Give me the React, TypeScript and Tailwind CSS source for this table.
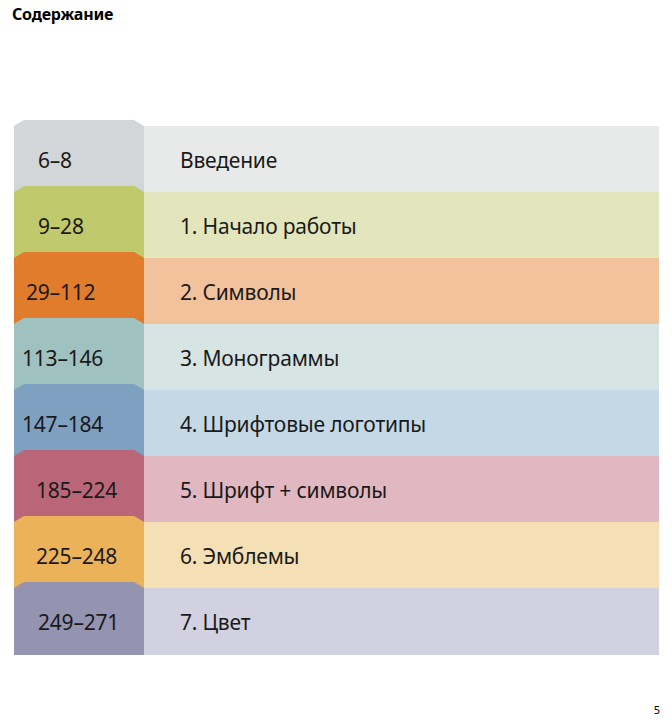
import React from 'react';

const rows = [
    { pages: '6–8', title: 'Введение', tab: 'bg-[#d2d6d9]', body: 'bg-[#e8eaea]', pad: 'pl-[24px]' },
    { pages: '9–28', title: '1. Начало работы', tab: 'bg-[#c0c96b]', body: 'bg-[#e3e6bc]', pad: 'pl-[24px]' },
    { pages: '29–112', title: '2. Символы', tab: 'bg-[#e07c2c]', body: 'bg-[#f2c29c]', pad: 'pl-[12px]' },
    { pages: '113–146', title: '3. Монограммы', tab: 'bg-[#9fc1c0]', body: 'bg-[#d7e4e4]', pad: 'pl-[8px]' },
    { pages: '147–184', title: '4. Шрифтовые логотипы', tab: 'bg-[#7ea0c1]', body: 'bg-[#c5d8e5]', pad: 'pl-[8px]' },
    { pages: '185–224', title: '5. Шрифт + символы', tab: 'bg-[#b96778]', body: 'bg-[#e1b8c1]', pad: 'pl-[22px]' },
    { pages: '225–248', title: '6. Эмблемы', tab: 'bg-[#ebb25a]', body: 'bg-[#f5dfb4]', pad: 'pl-[22px]' },
    { pages: '249–271', title: '7. Цвет', tab: 'bg-[#9493b0]', body: 'bg-[#d2d1e1]', pad: 'pl-[24px]' },
];

export default function App() {
    return (
        <div className="relative w-[672px] h-[720px] bg-white text-[#1a1a1a] font-['Noto_Sans',sans-serif]">
            <h1 className="pl-[12px] pt-[3px] text-[16px] font-bold leading-[22px] tracking-[-0.2px] text-black">Содержание</h1>

            <div className="mt-[101px] ml-[14px] w-[645px] flex flex-col">
                {rows.map((row, i) => (
                    <div key={i} className="flex h-[66px] last:h-[67px]">
                        <div className={`relative w-[130px] flex items-center pt-[3px] ${row.tab} ${row.pad}`}>
                            <div
                                className={`absolute -top-[6px] left-0 right-0 h-[6px] ${row.tab} [clip-path:polygon(0_100%,4px_60%,10px_0,calc(100%-10px)_0,calc(100%-4px)_60%,100%_100%)]`}
                            />
                            <span className="text-[21px] tracking-[-0.2px]">{row.pages}</span>
                        </div>
                        <div className={`flex-1 flex items-center pl-[36px] pt-[3px] ${row.body}`}>
                            <span className="text-[21px] tracking-[-0.2px]">{row.title}</span>
                        </div>
                    </div>
                ))}
            </div>

            <div className="absolute right-[12px] bottom-[2px] text-[11px] text-black">5</div>
        </div>
    );
}
